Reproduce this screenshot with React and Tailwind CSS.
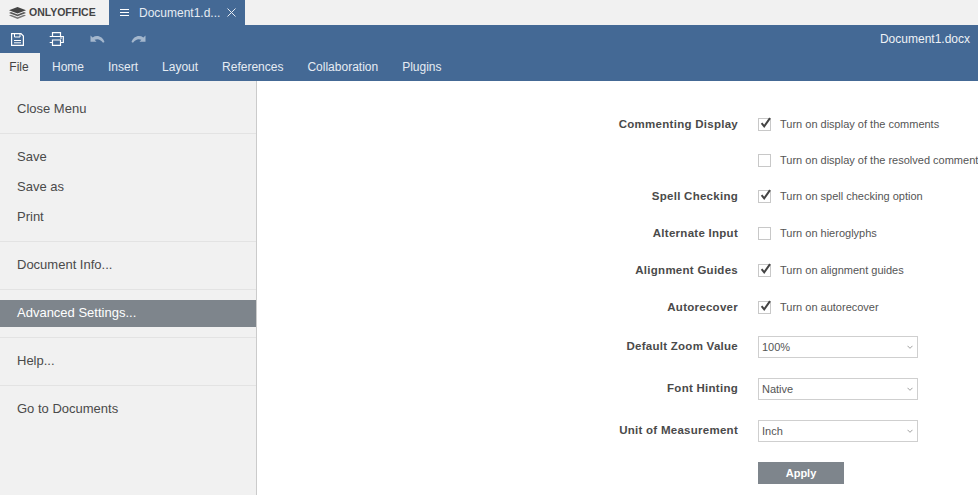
import React from 'react';

const menuClass = 'h-[30px] pl-[17px] pt-[2px] flex items-center text-[13px] text-[#4a4a4a]';

const Divider = () => <div className='h-px shrink-0 mt-[10px] mb-[7px] bg-[#e3e3e3]'></div>;

const Check = ({ on }) => (
    <div className='relative w-[13px] h-[13px] border border-[#c8c8c8] bg-white shrink-0'>
        {on && (
            <svg width='13' height='14' viewBox='0 0 13 14' className='absolute left-0 -top-[3px]'>
                <path d='M2.6 7.2 L5.2 10.4 L11 2.2' fill='none' stroke='#444' strokeWidth='2' />
            </svg>
        )}
    </div>
);

const CheckRow = ({ label, text, on, className }) => (
    <div className={`flex items-center h-[22px] ${className}`}>
        <div className='w-[481px] shrink-0 pt-[2px] text-right font-bold text-[11.5px] tracking-[0.27px] text-[#4a4a4a]'>{label}</div>
        <div className='ml-[20px] flex items-center gap-[9px] whitespace-nowrap text-[11px] text-[#555]'>
            <Check on={on} />
            <span>{text}</span>
        </div>
    </div>
);

const SelectRow = ({ label, value, className }) => (
    <div className={`flex items-center h-[22px] ${className}`}>
        <div className='w-[481px] shrink-0 text-right font-bold text-[11.5px] tracking-[0.27px] text-[#4a4a4a]'>{label}</div>
        <div className='ml-[20px] w-[160px] h-[22px] shrink-0 border border-[#cfcfcf] bg-white flex items-center justify-between pl-[3px] pr-[4px] text-[11px] text-[#555]'>
            <span>{value}</span>
            <svg width='6' height='4' viewBox='0 0 6 4'>
                <path d='M0.5 0.8 L3 3.3 L5.5 0.8' fill='none' stroke='#888' strokeWidth='0.8' />
            </svg>
        </div>
    </div>
);

const App = () => {
    return (
        <div className='w-full h-screen overflow-hidden flex flex-col bg-white font-["Liberation_Sans",Arial,sans-serif]'>
            <div className='h-[25px] shrink-0 flex bg-[#f1f1f1]'>
                <div className='w-[109px] flex items-center pl-[9px] gap-[3px]'>
                    <svg width='17' height='12' viewBox='0 0 17 12'>
                        <path d='M8.5 0 L17 3.3 L8.5 6.6 L0 3.3 Z' fill='#444' />
                        <path d='M2 5 L8.5 7.6 L15 5 L17 5.9 L8.5 9.3 L0 5.9 Z' fill='#555' />
                        <path d='M2 7.7 L8.5 10.3 L15 7.7 L17 8.6 L8.5 12 L0 8.6 Z' fill='#777' />
                    </svg>
                    <span className='font-bold text-[10.5px] text-[#444]'>ONLYOFFICE</span>
                </div>
                <div className='w-[136px] bg-[#446995] flex items-center text-white text-[12px] pl-[11px]'>
                    <svg width='9' height='7' viewBox='0 0 9 7'>
                        <path d='M0 0.5 H9 M0 3.5 H9 M0 6.5 H9' stroke='#fff' strokeWidth='1' />
                    </svg>
                    <span className='ml-[10px] w-[78px] text-[#e6ecf3] whitespace-nowrap'>Document1.d...</span>
                    <svg width='9' height='9' viewBox='0 0 9 9' className='ml-[10px]'>
                        <path d='M0.5 0.5 L8.5 8.5 M8.5 0.5 L0.5 8.5' stroke='#e6ecf3' strokeWidth='1' />
                    </svg>
                </div>
            </div>

            <div className='h-[28px] shrink-0 bg-[#446995] flex items-center pr-[8px]'>
                <svg width='13' height='13' viewBox='0 0 13 13' className='ml-[11px]'>
                    <path d='M0.6 0.6 H10 L12.4 3 V12.4 H0.6 Z' fill='none' stroke='#fff' strokeWidth='1.2' />
                    <path d='M3.5 1 V4 H9 V1 M3 7.5 H10 M3 9.8 H10' fill='none' stroke='#fff' strokeWidth='1' />
                </svg>
                <svg width='15' height='14' viewBox='0 0 15 14' className='ml-[25px]'>
                    <path d='M3.5 4 V0.7 H11.5 V4' fill='none' stroke='#fff' strokeWidth='1.2' />
                    <path d='M0.7 4.5 H14.3 V10.5 H11.5 M3.5 10.5 H0.7 Z' fill='none' stroke='#fff' strokeWidth='1.2' />
                    <path d='M3.5 8 H11.5 V13.3 H3.5 Z' fill='none' stroke='#fff' strokeWidth='1.2' />
                    <path d='M11 6 H13' stroke='#fff' strokeWidth='1' />
                </svg>
                <svg width='15' height='8' viewBox='0 0 15 8' className='ml-[26px]'>
                    <path d='M0.5 0.5 L0.5 6.8 L6.5 6.8 L4.6 4.8 C7.5 3.4 10.5 4.2 13 7.8 L14.5 7 C12.8 1.4 7 -0.6 2.6 2.4 Z' fill='#a4b7cd' />
                </svg>
                <svg width='15' height='8' viewBox='0 0 15 8' className='ml-[26px]'>
                    <path d='M14.5 0.5 L14.5 6.8 L8.5 6.8 L10.4 4.8 C7.5 3.4 4.5 4.2 2 7.8 L0.5 7 C2.2 1.4 8 -0.6 12.4 2.4 Z' fill='#a4b7cd' />
                </svg>
                <span className='ml-auto text-[12px] text-[#eef2f6]'>Document1.docx</span>
            </div>

            <div className='h-[28px] shrink-0 bg-[#446995] flex text-[12px] text-[#e6ecf3]'>
                <div className='w-[40px] bg-[#f1f1f1] text-[#444] flex items-center justify-center pr-[2px]'>File</div>
                <div className='flex items-center ml-[12px] gap-[24px]'>
                    <span>Home</span>
                    <span>Insert</span>
                    <span>Layout</span>
                    <span>References</span>
                    <span>Collaboration</span>
                    <span>Plugins</span>
                </div>
            </div>

            <div className='flex flex-1 min-h-0'>
                <div className='w-[257px] shrink-0 flex flex-col bg-[#f1f1f1] border-r border-[#cbcbcb] pt-[12px]'>
                    <div className={menuClass}>Close Menu</div>
                    <Divider />
                    <div className={menuClass}>Save</div>
                    <div className={menuClass}>Save as</div>
                    <div className={menuClass}>Print</div>
                    <Divider />
                    <div className={menuClass}>Document Info...</div>
                    <Divider />
                    <div className='h-[27px] shrink-0 mt-[3px] pl-[17px] pb-[2px] flex items-center text-[13px] text-white bg-[#7e858c]'>Advanced Settings...</div>
                    <Divider />
                    <div className={menuClass}>Help...</div>
                    <Divider />
                    <div className={menuClass}>Go to Documents</div>
                </div>

                <div className='flex-1 min-w-0 overflow-hidden pt-[32px]'>
                    <CheckRow label='Commenting Display' text='Turn on display of the comments' on />
                    <CheckRow className='mt-[14px]' text='Turn on display of the resolved comments' />
                    <CheckRow className='mt-[14px]' label='Spell Checking' text='Turn on spell checking option' on />
                    <CheckRow className='mt-[15px]' label='Alternate Input' text='Turn on hieroglyphs' />
                    <CheckRow className='mt-[15px]' label='Alignment Guides' text='Turn on alignment guides' on />
                    <CheckRow className='mt-[15px]' label='Autorecover' text='Turn on autorecover' on />
                    <SelectRow className='mt-[18px]' label='Default Zoom Value' value='100%' />
                    <SelectRow className='mt-[20px]' label='Font Hinting' value='Native' />
                    <SelectRow className='mt-[20px]' label='Unit of Measurement' value='Inch' />
                    <div className='ml-[501px] mt-[20px] w-[86px] h-[22px] bg-[#7e858c] flex items-center justify-center text-white font-bold text-[11px]'>Apply</div>
                </div>
            </div>
        </div>
    );
};

export default App;
